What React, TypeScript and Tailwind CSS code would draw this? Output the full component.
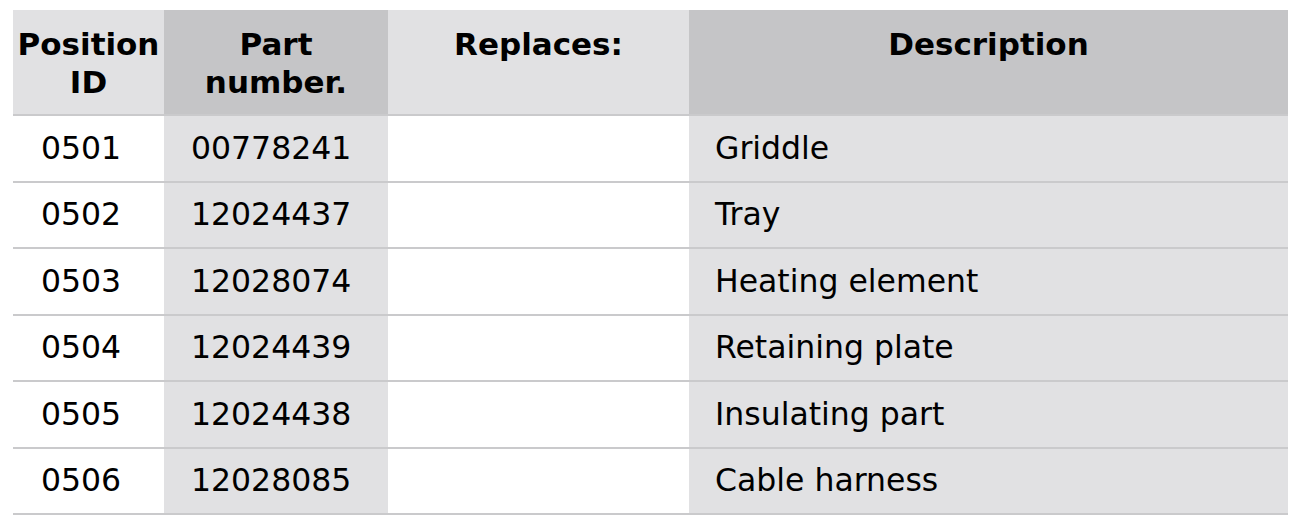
import React from "react";

interface Part {
  position: string;
  partNumber: string;
  replaces: string;
  description: string;
}

const parts: Part[] = [
  { position: "0501", partNumber: "00778241", replaces: "", description: "Griddle" },
  { position: "0502", partNumber: "12024437", replaces: "", description: "Tray" },
  { position: "0503", partNumber: "12028074", replaces: "", description: "Heating element" },
  { position: "0504", partNumber: "12024439", replaces: "", description: "Retaining plate" },
  { position: "0505", partNumber: "12024438", replaces: "", description: "Insulating part" },
  { position: "0506", partNumber: "12028085", replaces: "", description: "Cable harness" },
];

const App: React.FC = () => {
  return (
    <div className="min-h-screen bg-white pt-[10px] pl-[13px] text-black [font-family:'DejaVu_Sans',Verdana,sans-serif]">
      <div className="w-[1275px] border-b-2 border-[#cacacc]">
        {/* Header */}
        <div className="flex h-[104px] text-[31px] font-bold leading-[38px] text-center">
          <div className="w-[151px] bg-[#e1e1e3] pt-[15px]">
            Position
            <br />
            ID
          </div>
          <div className="w-[224px] bg-[#c5c5c7] pt-[15px]">
            Part
            <br />
            number.
          </div>
          <div className="w-[301px] bg-[#e1e1e3] pt-[15px]">Replaces:</div>
          <div className="w-[599px] bg-[#c5c5c7] pt-[15px]">Description</div>
        </div>

        {/* Rows */}
        {parts.map((p) => (
          <div
            key={p.position}
            className="flex h-[66.5px] border-t-2 border-[#cacacc] text-[31.5px] leading-none"
          >
            <div className="flex w-[151px] items-center bg-white pl-[28px]">{p.position}</div>
            <div className="flex w-[224px] items-center bg-[#e1e1e3] pl-[27px]">{p.partNumber}</div>
            <div className="flex w-[301px] items-center bg-white pl-[26px]">{p.replaces}</div>
            <div className="flex w-[599px] items-center bg-[#e1e1e3] pl-[26px]">{p.description}</div>
          </div>
        ))}
      </div>
    </div>
  );
};

export default App;
